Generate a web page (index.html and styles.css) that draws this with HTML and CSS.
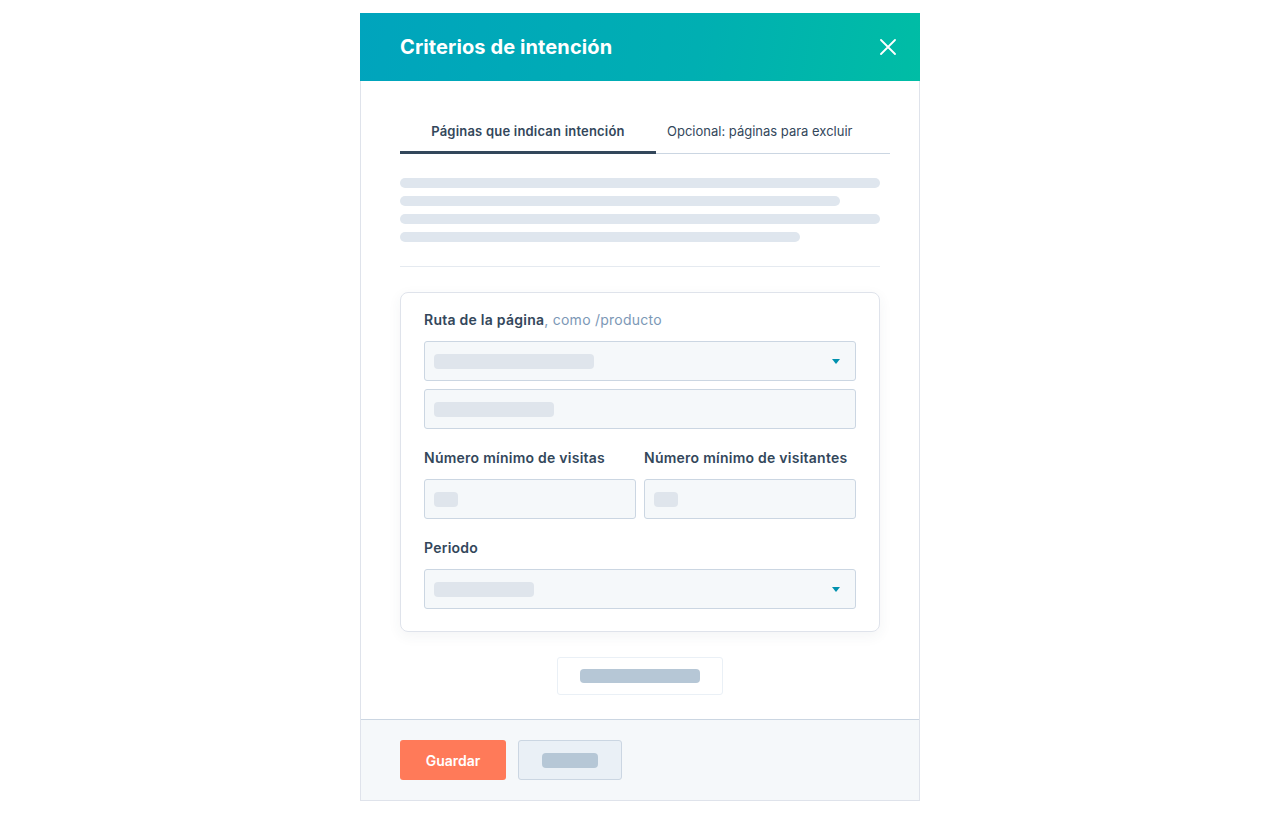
FILE: index.html
```html
<!DOCTYPE html>
<html lang="es">
    <head>
        <meta charset="UTF-8" />
        <meta name="viewport" content="width=device-width, initial-scale=1.0" />
        <title>Criterios de intención</title>
        <link rel="stylesheet" href="styles.css">
    </head>
    <body>
        <div class="modal">
            <div class="modal-header">
                <h1>Criterios de intención</h1>
                <a class="close" href="javascript:;">
                    <svg width="16" height="16" viewBox="0 0 16 16">
                        <path d="M1 1L15 15M15 1L1 15" stroke="#fff" stroke-width="1.8" stroke-linecap="round" fill="none" />
                    </svg>
                </a>
            </div>

            <div class="modal-body">
                <!-- 选项卡 -->
                <ul class="tabs">
                    <li class="tab current">Páginas que indican intención</li>
                    <li class="tab">Opcional: páginas para excluir</li>
                </ul>

                <!-- 说明文字占位 -->
                <div class="lines">
                    <span class="line" style="width: 480px"></span>
                    <span class="line" style="width: 440px"></span>
                    <span class="line" style="width: 480px"></span>
                    <span class="line" style="width: 400px"></span>
                </div>

                <hr class="divider" />

                <div class="card">
                    <label class="label">Ruta de la página<span class="hint">, como /producto</span></label>
                    <div class="field select">
                        <span class="ph" style="width: 160px"></span>
                        <i class="caret"></i>
                    </div>
                    <div class="field">
                        <span class="ph" style="width: 120px"></span>
                    </div>

                    <div class="row">
                        <div class="col">
                            <label class="label">Número mínimo de visitas</label>
                            <div class="field">
                                <span class="ph" style="width: 24px"></span>
                            </div>
                        </div>
                        <div class="col">
                            <label class="label">Número mínimo de visitantes</label>
                            <div class="field">
                                <span class="ph" style="width: 24px"></span>
                            </div>
                        </div>
                    </div>

                    <label class="label">Periodo</label>
                    <div class="field select">
                        <span class="ph" style="width: 100px"></span>
                        <i class="caret"></i>
                    </div>
                </div>

                <div class="add">
                    <a class="add-btn" href="javascript:;"><span class="ph dark" style="width: 120px"></span></a>
                </div>
            </div>

            <div class="modal-footer">
                <a class="btn primary" href="javascript:;">Guardar</a>
                <a class="btn secondary" href="javascript:;"><span class="ph dark" style="width: 56px"></span></a>
            </div>
        </div>
    </body>
</html>
```

FILE: styles.css
```css
* {
    margin: 0;
    padding: 0;
    box-sizing: border-box;
}

body {
    background-color: #fff;
    font-family: Inter, "Noto Sans", "Liberation Sans", sans-serif;
    color: #33475b;
}

ul {
    list-style: none;
}

a {
    text-decoration: none;
}

.modal {
    width: 560px;
    margin: 13px auto 0;
    border: 1px solid #dfe3eb;
    border-top: none;
    background-color: #fff;
}

/* 标题栏 */
.modal-header {
    height: 68px;
    margin: 0 -1px;
    padding: 0 24px 0 40px;
    display: flex;
    align-items: center;
    justify-content: space-between;
    background: linear-gradient(100deg, #00a4bd 0%, #00afb2 60%, #00bda5 100%);
}

.modal-header h1 {
    font-size: 20px;
    font-weight: 700;
    color: #fff;
    letter-spacing: 0.1px;
}

.close {
    display: flex;
    width: 16px;
    height: 16px;
}

.modal-body {
    padding: 40px 39px 24px;
}

/* 选项卡 */
.tabs {
    display: flex;
    margin-right: -10px;
    box-shadow: inset 0 -1px 0 #cbd6e2;
}

.tab {
    font-size: 13px;
    line-height: 20px;
    padding: 0 11px 10px;
    border-bottom: 3px solid transparent;
    cursor: pointer;
}

.tab.current {
    width: 256px;
    text-align: center;
    font-weight: 600;
    letter-spacing: 0.2px;
    padding: 0 0 10px;
    border-bottom-color: #33475b;
}

.lines {
    margin-top: 24px;
    display: flex;
    flex-direction: column;
    gap: 8px;
}

.line {
    display: block;
    height: 10px;
    border-radius: 5px;
    background-color: #dfe6ee;
}

.divider {
    border: none;
    border-top: 1px solid #e5eaf0;
    margin: 24px 0 25px;
}

/* 表单卡片 */
.card {
    border: 1px solid #dfe3eb;
    border-radius: 8px;
    padding: 16px 23px 22px;
    box-shadow: 0 4px 14px rgba(45, 62, 80, 0.06);
}

.label {
    display: block;
    font-size: 14px;
    font-weight: 600;
    letter-spacing: 0.25px;
    line-height: 22px;
    margin-bottom: 10px;
}

.hint {
    font-weight: 400;
    color: #7c98b6;
}

.field {
    height: 40px;
    border: 1px solid #cbd6e2;
    border-radius: 3px;
    background-color: #f5f8fa;
    padding: 0 9px;
    display: flex;
    align-items: center;
    justify-content: space-between;
}

.field + .field {
    margin-top: 8px;
}

.ph {
    display: block;
    height: 15px;
    border-radius: 4px;
    background-color: #dfe5ec;
}

.ph.dark {
    height: 14px;
    background-color: #b6c7d6;
}

.caret {
    width: 0;
    height: 0;
    margin-right: 6px;
    border-left: 4px solid transparent;
    border-right: 4px solid transparent;
    border-top: 5px solid #0091ae;
}

.row {
    display: flex;
    gap: 8px;
    margin: 18px 0;
}

.col {
    flex: 1;
}

.add {
    display: flex;
    justify-content: center;
    margin-top: 25px;
}

.add-btn {
    display: flex;
    justify-content: center;
    align-items: center;
    width: 166px;
    height: 38px;
    border: 1px solid #eaf0f6;
    border-radius: 3px;
    background-color: #fff;
}

/* 底部按钮 */
.modal-footer {
    border-top: 1px solid #cbd6e2;
    background-color: #f5f8fa;
    padding: 20px 39px;
    display: flex;
    gap: 12px;
}

.btn {
    height: 40px;
    display: flex;
    align-items: center;
    justify-content: center;
    border-radius: 3px;
    font-size: 14px;
    font-weight: 600;
}

.btn.primary {
    width: 106px;
    background-color: #ff7a59;
    color: #fff;
}

.btn.secondary {
    width: 104px;
    background-color: #eaf0f6;
    border: 1px solid #cbd6e2;
}

.btn.secondary .ph {
    height: 15px;
}
```
